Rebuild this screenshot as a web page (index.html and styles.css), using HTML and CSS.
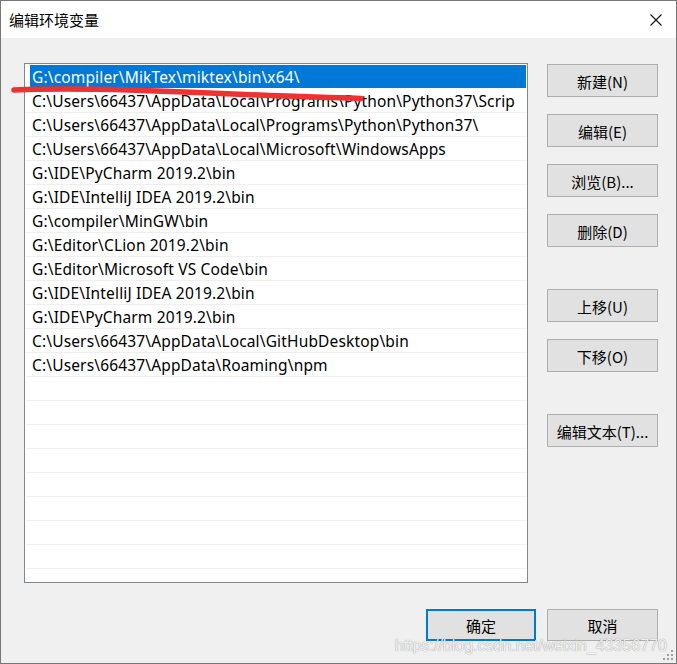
FILE: index.html
```html
<!DOCTYPE html>
<html lang="zh-CN">
<head>
<meta charset="utf-8">
<title>编辑环境变量</title>
<link rel="stylesheet" href="styles.css">
</head>
<body>
<div class="window">
  <div class="titlebar">
    <span class="title">编辑环境变量</span>
    <span class="close" aria-label="关闭">
      <svg width="12" height="12" viewBox="0 0 12 12"><path d="M0.5 0.5 L11.5 11.5 M11.5 0.5 L0.5 11.5" stroke="#111" stroke-width="1.1" fill="none"/></svg>
    </span>
  </div>
  <div class="content">
    <div class="main">
      <div class="list">
        <div class="row selected"><span class="txt">G:\compiler\MikTex\miktex\bin\x64\</span></div>
        <div class="row"><span class="txt">C:\Users\66437\AppData\Local\Programs\Python\Python37\Scrip</span></div>
        <div class="row"><span class="txt">C:\Users\66437\AppData\Local\Programs\Python\Python37\</span></div>
        <div class="row"><span class="txt">C:\Users\66437\AppData\Local\Microsoft\WindowsApps</span></div>
        <div class="row"><span class="txt">G:\IDE\PyCharm 2019.2\bin</span></div>
        <div class="row"><span class="txt">G:\IDE\IntelliJ IDEA 2019.2\bin</span></div>
        <div class="row"><span class="txt">G:\compiler\MinGW\bin</span></div>
        <div class="row"><span class="txt">G:\Editor\CLion 2019.2\bin</span></div>
        <div class="row"><span class="txt">G:\Editor\Microsoft VS Code\bin</span></div>
        <div class="row"><span class="txt">G:\IDE\IntelliJ IDEA 2019.2\bin</span></div>
        <div class="row"><span class="txt">G:\IDE\PyCharm 2019.2\bin</span></div>
        <div class="row"><span class="txt">C:\Users\66437\AppData\Local\GitHubDesktop\bin</span></div>
        <div class="row"><span class="txt">C:\Users\66437\AppData\Roaming\npm</span></div>
        <div class="row"></div>
        <div class="row"></div>
        <div class="row"></div>
        <div class="row"></div>
        <div class="row"></div>
        <div class="row"></div>
        <div class="row"></div>
        <div class="row"></div>
      </div>
      <div class="side">
        <button class="btn">新建(N)</button>
        <button class="btn">编辑(E)</button>
        <button class="btn">浏览(B)...</button>
        <button class="btn">删除(D)</button>
        <button class="btn group">上移(U)</button>
        <button class="btn">下移(O)</button>
        <button class="btn group">编辑文本(T)...</button>
      </div>
    </div>
    <div class="footer">
      <button class="btn wide default">确定</button>
      <button class="btn wide">取消</button>
    </div>
  </div>
  <svg class="scribble" width="380" height="22" viewBox="0 0 380 22">
    <path d="M13 7 C 60 5, 110 6, 170 8.5 S 300 14, 360 15.5" stroke="#ee3131" stroke-width="5.5" stroke-linecap="round" fill="none"/>
  </svg>
  <div class="watermark">https://blog.csdn.net/weixin_43356770</div>
  <svg class="grip" width="12" height="12" viewBox="0 0 12 12">
    <rect x="9" y="1" width="2" height="2" fill="#a0a0a0"/>
    <rect x="5" y="5" width="2" height="2" fill="#a0a0a0"/>
    <rect x="9" y="5" width="2" height="2" fill="#a0a0a0"/>
    <rect x="1" y="9" width="2" height="2" fill="#a0a0a0"/>
    <rect x="5" y="9" width="2" height="2" fill="#a0a0a0"/>
    <rect x="9" y="9" width="2" height="2" fill="#a0a0a0"/>
  </svg>
</div>
</body>
</html>
```
FILE: styles.css
```css
* { box-sizing: border-box; }
html, body { margin: 0; padding: 0; background: #fff; }
body {
  font-family: "Noto Sans", "Noto Sans CJK SC", sans-serif;
  font-size: 15px;
  color: #000;
}
.window {
  position: relative;
  width: 677px;
  height: 664px;
  border: 1px solid #777;
  display: flex;
  flex-direction: column;
  overflow: hidden;
}
.titlebar {
  height: 37px;
  background: #fff;
  display: flex;
  align-items: center;
  justify-content: space-between;
  padding: 0 14px 0 8px;
  flex: none;
}
.title {
  font-family: "Noto Sans CJK SC", sans-serif;
  font-size: 15px;
  line-height: 1;
}
.close { display: flex; width: 12px; height: 12px; margin-top: 1px; }
.content {
  flex: 1;
  background: #f0f0f0;
  padding: 25px 18px 0 23px;
  display: flex;
  flex-direction: column;
}
.main { display: flex; gap: 19px; }
.list {
  width: 504px;
  height: 520px;
  background: #fff;
  border: 1px solid #82868d;
  padding-top: 1px;
  overflow: hidden;
}
.row {
  height: 24px;
  margin: 0 1px;
  border-bottom: 1px solid #efefef;
  padding-left: 6px;
  line-height: 24px;
  font-size: 15.5px;
  letter-spacing: 0.15px;
  white-space: nowrap;
}
.txt {
  display: block;
}
.row.selected {
  background: linear-gradient(to right, transparent 4px, #0078d7 4px);
  color: #fff;
  border-bottom-color: #fff;
}
.side {
  display: flex;
  flex-direction: column;
  gap: 17px;
  padding-top: 1px;
}
.btn {
  width: 111px;
  height: 33px;
  background: #e1e1e1;
  border: 1px solid #adadad;
  font-family: "Noto Sans CJK SC", sans-serif;
  font-size: 15px;
  color: #000;
  padding: 1px 0 0;
  line-height: 1;
}
.btn.group { margin-top: 25px; }
.footer {
  display: flex;
  justify-content: flex-end;
  gap: 11px;
  margin-top: 26px;
}
.btn.wide { height: 32px; }
.btn.default { width: 110px; border: 2px solid #0078d7; }
.scribble {
  position: absolute;
  left: 0;
  top: 82px;
}
.watermark {
  position: absolute;
  right: 9px;
  bottom: 8px;
  font-family: "Liberation Sans", Arial, sans-serif;
  font-size: 16px;
  color: rgba(255,255,255,0.9);
  text-shadow: 0 0 1px rgba(0,0,0,0.5);
  white-space: nowrap;
}
.grip {
  position: absolute;
  right: 2px;
  bottom: 2px;
}
```
